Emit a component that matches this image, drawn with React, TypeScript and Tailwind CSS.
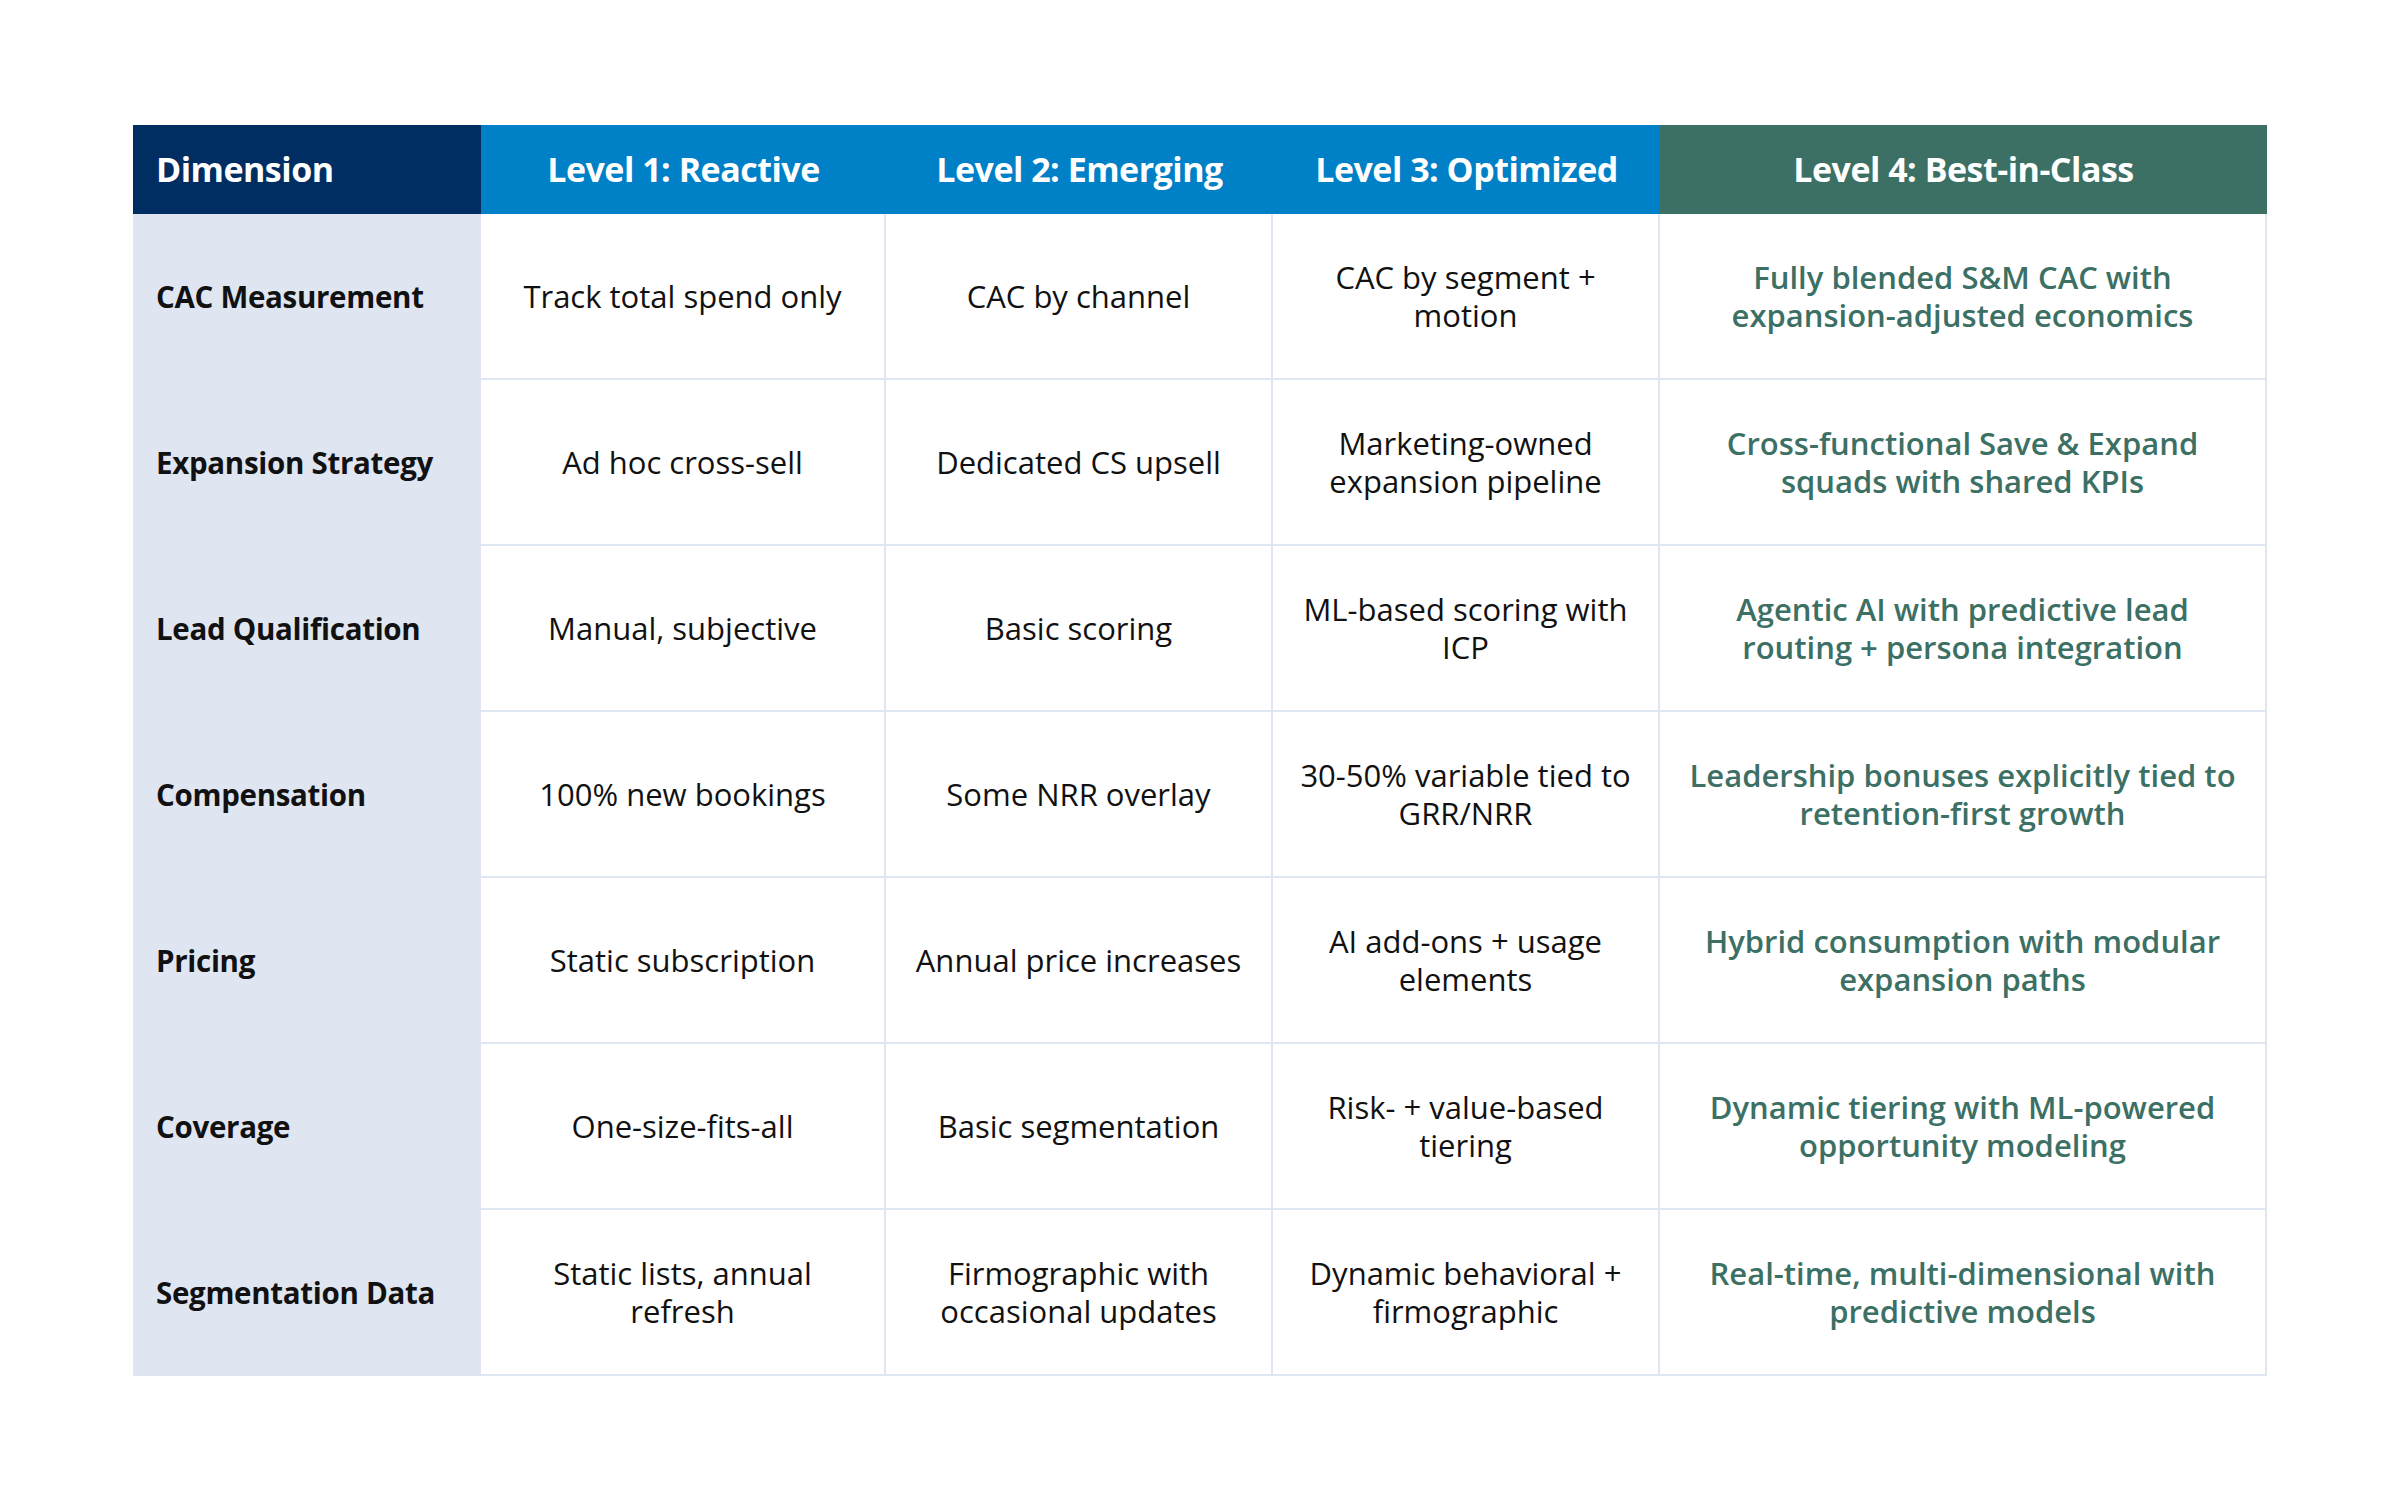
const rows = [
  {
    label: "CAC Measurement",
    cells: ["Track total spend only", "CAC by channel", "CAC by segment + motion"],
    best: "Fully blended S&M CAC with expansion-adjusted economics",
  },
  {
    label: "Expansion Strategy",
    cells: ["Ad hoc cross-sell", "Dedicated CS upsell", "Marketing-owned expansion pipeline"],
    best: "Cross-functional Save & Expand squads with shared KPIs",
  },
  {
    label: "Lead Qualification",
    cells: ["Manual, subjective", "Basic scoring", "ML-based scoring with ICP"],
    best: "Agentic AI with predictive lead routing + persona integration",
  },
  {
    label: "Compensation",
    cells: ["100% new bookings", "Some NRR overlay", "30-50% variable tied to GRR/NRR"],
    best: "Leadership bonuses explicitly tied to retention-first growth",
  },
  {
    label: "Pricing",
    cells: ["Static subscription", "Annual price increases", "AI add-ons + usage elements"],
    best: "Hybrid consumption with modular expansion paths",
  },
  {
    label: "Coverage",
    cells: ["One-size-fits-all", "Basic segmentation", "Risk- + value-based tiering"],
    best: "Dynamic tiering with ML-powered opportunity modeling",
  },
  {
    label: "Segmentation Data",
    cells: ["Static lists, annual refresh", "Firmographic with occasional updates", "Dynamic behavioral + firmographic"],
    best: "Real-time, multi-dimensional with predictive models",
  },
];

const cellPad = ["px-[30px]", "px-[14px]", "px-[14px]"];

export default function App() {
  return (
    <div className="min-h-screen w-full bg-white pt-[125px] pl-[133px] font-['Open_Sans',_'Liberation_Sans',_sans-serif]">
      <div className="grid w-[2134px] grid-cols-[348px_405px_387px_387px_607px]">
        <div className="flex h-[89px] items-center bg-[#002d62] pl-[23px] text-[34px] font-bold tracking-[-0.5px] text-white">
          Dimension
        </div>
        <div className="flex h-[89px] items-center justify-center bg-[#0080c6] text-[34px] font-bold tracking-[-0.5px] text-white">
          Level 1: Reactive
        </div>
        <div className="flex h-[89px] items-center justify-center bg-[#0080c6] text-[34px] font-bold tracking-[-0.5px] text-white">
          Level 2: Emerging
        </div>
        <div className="flex h-[89px] items-center justify-center bg-[#0080c6] text-[34px] font-bold tracking-[-0.5px] text-white">
          Level 3: Optimized
        </div>
        <div className="flex h-[89px] items-center justify-center bg-[#3c7064] text-[34px] font-bold tracking-[-0.5px] text-white">
          Level 4: Best-in-Class
        </div>

        {rows.map((row) => (
          <div key={row.label} className="contents">
            <div className="flex h-[166px] items-center bg-[#dfe6f1] pl-[23px] text-[29.5px] font-bold tracking-[-0.3px] text-[#111]">
              {row.label}
            </div>
            {row.cells.map((cell, i) => (
              <div
                key={i}
                className={`flex h-[166px] items-center justify-center border-b-2 border-r-2 border-[#dde6f1] ${cellPad[i]} text-center text-[31px] leading-[38px] text-[#111]`}
              >
                {cell}
              </div>
            ))}
            <div className="flex h-[166px] items-center justify-center border-b-2 border-r-2 border-[#dde6f1] px-[20px] text-center text-[31px] font-semibold leading-[38px] text-[#3c7064]">
              {row.best}
            </div>
          </div>
        ))}
      </div>
    </div>
  );
}
